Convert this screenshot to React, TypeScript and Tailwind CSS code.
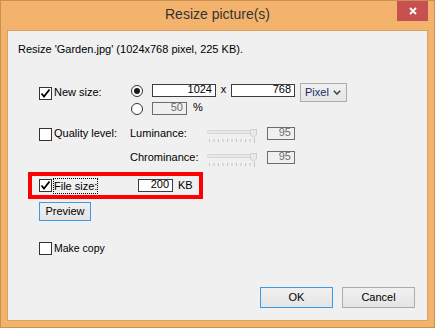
import React from 'react';

const Checkbox = ({ checked = false, className = '' }: { checked?: boolean; className?: string }) => (
  <div className={`w-[13px] h-[13px] shrink-0 border border-[#333333] bg-white flex items-center justify-center ${className}`}>
    {checked && (
      <svg width="11" height="11" viewBox="0 0 11 11">
        <path d="M1.5 5.5 L4 8.5 L9.5 1.5" fill="none" stroke="#000" strokeWidth="1.8" />
      </svg>
    )}
  </div>
);

const Radio = ({ checked = false, className = '' }: { checked?: boolean; className?: string }) => (
  <div className={`w-[12px] h-[12px] shrink-0 rounded-full border border-[#333333] bg-white flex items-center justify-center ${className}`}>
    {checked && <div className="w-[6px] h-[6px] rounded-full bg-[#1a1a1a]" />}
  </div>
);

const TextBox = ({ value, disabled = false, className = '' }: { value: string; disabled?: boolean; className?: string }) => (
  <div
    className={`h-[13px] shrink-0 border text-right pr-[3px] text-[11px] leading-[9px] ${
      disabled ? 'border-[#6d6d6d] bg-[#f0f0f0] text-[#6d6d6d]' : 'border-[#3c3c3c] bg-white text-black'
    } ${className}`}
  >
    {value}
  </div>
);

const Button = ({ label, primary = false, className = '' }: { label: string; primary?: boolean; className?: string }) => (
  <div
    className={`shrink-0 border flex items-center justify-center text-[11px] leading-[13px] text-black bg-gradient-to-b from-[#f0f0f0] to-[#e5e5e5] ${
      primary ? 'border-[#3c9ae8]' : 'border-[#acacac]'
    } ${className}`}
  >
    {label}
  </div>
);

// disabled trackbar, drawn
const Slider = () => (
  <svg width="52" height="16" viewBox="0 0 52 16" className="shrink-0 overflow-visible">
    <rect x="0.5" y="3.5" width="48" height="3" rx="1" fill="#e8eaea" stroke="#d6d6d6" />
    <path d="M43.5 2.5 H49.5 V8 L46.5 10.5 L43.5 8 Z" fill="#e9e9e9" stroke="#d0d0d0" />
    {Array.from({ length: 11 }).map((_, i) => (
      <rect key={i} x={2 + i * 4.5} y={i === 10 ? 11 : 12} width="1" height={i === 10 ? 5 : 3} fill="#c4c4c4" />
    ))}
  </svg>
);

export default function App() {
  return (
    <div className="w-[435px] h-[328px] bg-[#f4b36d] border border-[#c9914f] flex flex-col font-['Liberation_Sans',Arial,sans-serif] text-black">
      {/* title bar */}
      <div className="h-[29px] grid grid-cols-[1fr_auto_1fr] shrink-0">
        <div />
        <div className="pt-[3px] text-[14px] leading-[20px] text-[#333333]">Resize picture(s)</div>
        <div className="flex justify-end">
          <div className="w-[31px] h-[20px] mr-[6px] bg-[#c75050] flex items-center justify-center">
            <svg width="8" height="8" viewBox="0 0 8 8">
              <path d="M1 1 L7 7 M7 1 L1 7" stroke="#fff" strokeWidth="1.8" />
            </svg>
          </div>
        </div>
      </div>

      {/* client area */}
      <div className="ml-[6px] w-[421px] h-[291px] border border-[#d9a263] bg-[#f0f0f0] flex flex-col">
        <div className="ml-[10px] mt-[11px] h-[14px] text-[11px] leading-[14px]">
          Resize 'Garden.jpg' (1024x768 pixel, 225 KB).
        </div>

        {/* new size */}
        <div className="mt-[27px] ml-[31px] flex items-start h-[19px]">
          <div className="w-[92px] flex items-start shrink-0">
            <Checkbox checked className="mt-[4px]" />
            <span className="ml-[2px] mt-[2px] text-[11px] leading-[14px]">New size:</span>
          </div>
          <Radio checked className="mt-[2px]" />
          <TextBox value="1024" className="ml-[9px] mt-[1px] w-[64px]" />
          <div className="w-[15px] text-center text-[11px] leading-[13px]">x</div>
          <TextBox value="768" className="mt-[1px] w-[64px]" />
          <div className="ml-[5px] w-[47px] h-[19px] border border-[#acacac] bg-gradient-to-b from-[#f0f0f0] to-[#e5e5e5] flex items-center justify-between pl-[4px] pr-[5px]">
            <span className="text-[11px] leading-[13px] text-[#1a2a60]">Pixel</span>
            <svg width="8" height="5" viewBox="0 0 8 5">
              <path d="M0.8 0.8 L4 4 L7.2 0.8" fill="none" stroke="#444" strokeWidth="1.6" />
            </svg>
          </div>
        </div>
        <div className="ml-[31px] flex items-start h-[13px]">
          <div className="w-[92px] shrink-0" />
          <Radio className="mt-[1px]" />
          <TextBox value="50" disabled className="ml-[9px] w-[35px]" />
          <span className="ml-[6px] text-[11px] leading-[10px]">%</span>
        </div>

        {/* quality */}
        <div className="mt-[12px] ml-[31px] flex items-start">
          <div className="w-[91px] flex items-start shrink-0">
            <Checkbox className="mt-[1px]" />
            <span className="ml-[2px] text-[11px] leading-[12px]">Quality level:</span>
          </div>
          <div className="flex flex-col">
            <div className="flex items-start h-[13px]">
              <span className="w-[77px] text-[11px] leading-[12px]">Luminance:</span>
              <Slider />
              <TextBox value="95" disabled className="ml-[8px] w-[28px]" />
            </div>
            <div className="mt-[11px] flex items-start h-[13px]">
              <span className="w-[77px] text-[11px] leading-[12px]">Chrominance:</span>
              <Slider />
              <TextBox value="95" disabled className="ml-[8px] w-[28px]" />
            </div>
          </div>
        </div>

        {/* file size, highlighted */}
        <div className="mt-[8px] ml-[20px] w-[175px] h-[27px] border-4 border-[#ff0000] flex items-center pl-[7px]">
          <Checkbox checked />
          <div className="w-[85px] ml-[1px] flex">
            <span className="h-[16px] border border-dotted border-black text-[11px] leading-[14px]">File size:</span>
          </div>
          <TextBox value="200" className="w-[35px]" />
          <span className="ml-[5px] text-[11px] leading-[13px]">KB</span>
        </div>

        <Button label="Preview" primary className="mt-[3px] ml-[31px] w-[52px] h-[19px]" />

        <div className="mt-[21px] ml-[31px] flex items-start">
          <Checkbox />
          <span className="ml-[2px] text-[10.5px] leading-[12px]">Make copy</span>
        </div>

        <div className="flex-1" />
        <div className="flex justify-end gap-[9px] mr-[12px] mb-[12px]">
          <Button label="OK" primary className="w-[73px] h-[21px]" />
          <Button label="Cancel" className="w-[73px] h-[21px]" />
        </div>
      </div>
    </div>
  );
}
